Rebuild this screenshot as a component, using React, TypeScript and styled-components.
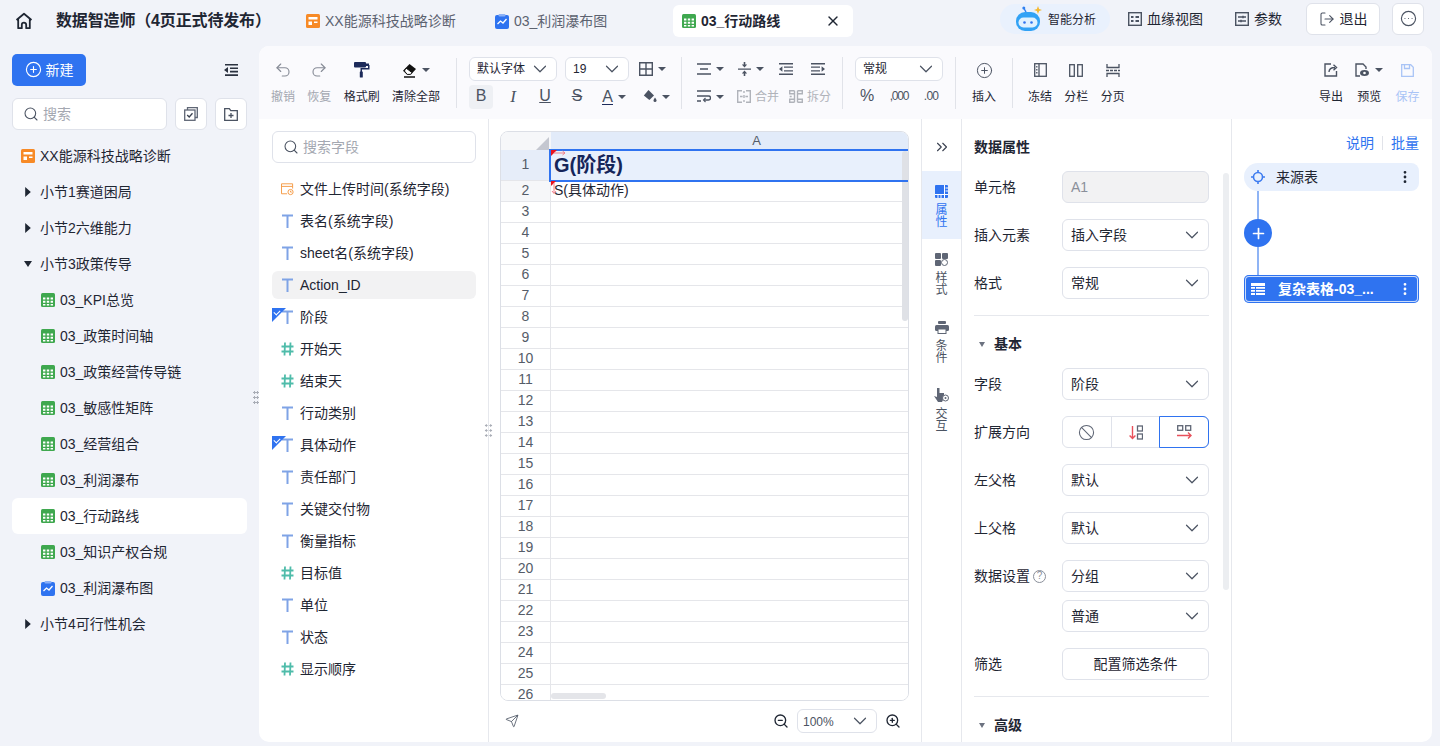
import React from "react";
import styled, { createGlobalStyle, css } from "styled-components";
import {
  Ban,
  ChevronDown,
  ChevronsRight,
  CircleEllipsis,
  CirclePlus,
  EllipsisVertical,
  LogOut,
  Plus,
  Redo2,
  Search,
  Send,
  Undo2,
  X,
  ZoomIn,
  ZoomOut,
} from "lucide-react";

const GlobalStyle = createGlobalStyle`
  html, body { margin: 0; height: 100%; overflow: hidden; }
  body {
    background: #f1f3f9;
    color: #1f2633;
    font-family: "Liberation Sans", "Noto Sans CJK SC", sans-serif;
    font-size: 14px;
    line-height: 1.4;
  }
  * { box-sizing: border-box; }
`;

/* text sits 1px under the middle of its row, icons stay centred */
const textDrop = css`
  padding-top: 2px;
  & > svg,
  & > span {
    margin-top: -2px;
  }
`;

/* ---------- small drawings ---------- */

const HomeIcon = () => (
  <svg width="18" height="18" viewBox="0 0 18 18" fill="none" stroke="#1f2633" strokeWidth="1.8">
    <path d="M1.5 8 9 1.8 16.5 8M3.2 7v9.2h3.6v-3.4a2.2 2.2 0 0 1 4.4 0v3.4h3.6V7" strokeLinejoin="round" />
  </svg>
);

const ReportIcon = () => (
  <svg width="14" height="14" viewBox="0 0 14 14">
    <rect width="14" height="14" rx="1.5" fill="#f78a27" />
    <path d="M2.5 3h9v2.5h-9zM2.5 7.500h3.500v3.500H2.500zM8 7.500h3.500V9H8z" fill="#fff" />
  </svg>
);

const SheetIcon = () => (
  <svg width="14" height="14" viewBox="0 0 14 14">
    <rect width="14" height="14" rx="1.5" fill="#3fa84f" />
    <path
      d="M2 4.500h2.400v2H2zM5.800 4.500h2.400v2H5.800zM9.600 4.500H12v2H9.600zM2 7.800h2.400v2H2zM5.800 7.800h2.400v2H5.800zM9.600 7.800H12v2H9.600zM2 11h2.400v1.500H2zM5.800 11h2.400v1.500H5.800zM9.600 11H12v1.500H9.600z"
      fill="#fff"
    />
  </svg>
);

const ChartIcon = () => (
  <svg width="14" height="15" viewBox="0 0 14 15">
    <rect y="1" width="14" height="14" rx="2" fill="#2f73f0" />
    <rect x="3.500" width="7" height="2.600" rx="1" fill="#8db2f7" />
    <path d="m2.500 10 3-3 2.500 2 3.500-4" fill="none" stroke="#fff" strokeWidth="1.300" />
  </svg>
);

const RobotIcon = () => (
  <svg width="28" height="26" viewBox="0 0 28 26">
    <path d="M11 6 9 2.500" stroke="#2f80f0" strokeWidth="1.500" />
    <circle cx="8.800" cy="2" r="1.500" fill="#2f80f0" />
    <path d="m23 0 1.100 2.900 2.900 1.100-2.900 1.100L23 8l-1.100-2.900L19 4l2.900-1.100z" fill="#f5b82e" />
    <rect x="1" y="6" width="24" height="19" rx="9" fill="#31a2f5" />
    <rect x="3.500" y="11.500" width="19" height="10" rx="5" fill="#dff1ff" />
    <circle cx="9.500" cy="16.500" r="1.300" fill="#2f73f0" />
    <circle cx="16.500" cy="16.500" r="1.300" fill="#2f73f0" />
  </svg>
);

const BloodIcon = () => (
  <svg width="14" height="14" viewBox="0 0 14 14" fill="none" stroke="#4b5362" strokeWidth="1.400">
    <rect x=".7" y=".7" width="12.600" height="12.600" />
    <path d="M3 5h2.500M3 9h2.500M7.500 5H11M7.500 9H11" strokeWidth="1.800" />
  </svg>
);

const ParamIcon = () => (
  <svg width="14" height="14" viewBox="0 0 14 14" fill="none" stroke="#4b5362" strokeWidth="1.400">
    <rect x=".7" y=".7" width="12.600" height="12.600" />
    <path d="M3 5h8M3 9h8" />
    <path d="M8 3.800v2.400M6 7.800v2.400" />
  </svg>
);

const CollapseIcon = () => (
  <svg width="14" height="12" viewBox="0 0 14 12" fill="#2b3240">
    <path d="M1 0h13v1.600H1zM6 3.400h8V5H6zM6 6.800h8v1.600H6zM1 10.200h13V12H1zM4 3v6L0 6z" />
  </svg>
);

const SelectAllIcon = () => (
  <svg width="14" height="14" viewBox="0 0 14 14" fill="none" stroke="#5f6675" strokeWidth="1.300">
    <path d="M3.500 3V.7h9.800v9.800H11" />
    <rect x=".7" y="3" width="10.300" height="10.300" />
    <path d="m3.200 8 2 2 3.300-3.800" stroke="#3a4150" />
  </svg>
);

const NewFolderIcon = () => (
  <svg width="14" height="13" viewBox="0 0 14 13" fill="none" stroke="#4b5362" strokeWidth="1.300">
    <path d="M.7 12.300V.7h4.600l1.500 2h6.500v9.600z" />
    <path d="M7 5v5M4.500 7.500h5" />
  </svg>
);

const RollerIcon = () => (
  <svg width="16" height="16" viewBox="0 0 16 16" fill="#1c2a5a">
    <rect x="0" y="0" width="12" height="5.500" rx="1" />
    <rect x="12" y="1.500" width="3" height="2.500" />
    <path d="M14 3h1.500v4.500H8V10H6.500V6H14z" />
    <rect x="5.800" y="9.500" width="3" height="6" rx=".6" />
  </svg>
);

const EraserIcon = () => (
  <svg width="15" height="15" viewBox="0 0 15 15">
    <path d="m7.500 1 6.500 5-5 5.400H5L1 7.800z" fill="#111" />
    <path d="m4 5 6 4.600L8.500 11.400H5.200L2.400 8z" fill="#fff" stroke="#111" />
    <path d="M2 14h11" stroke="#111" strokeWidth="1.400" />
  </svg>
);

const GridIcon = () => (
  <svg width="14" height="14" viewBox="0 0 14 14" fill="none" stroke="#4b5362" strokeWidth="1.400">
    <path d="M.7.7h12.600v12.600H.7zM7 .7v12.600M.7 7h12.600" />
  </svg>
);

const AlignIcon = () => (
  <svg width="14" height="12" viewBox="0 0 14 12" fill="none" stroke="#4b5362" strokeWidth="1.400">
    <path d="M0 1h14M3 6h8M0 11h14" />
  </svg>
);

const VAlignIcon = () => (
  <svg width="13" height="14" viewBox="0 0 13 14" fill="#4b5362">
    <path d="M0 6.400h13v1.300H0zM6.500 5.500 3.800 2.600h1.900V0h1.600v2.600h1.900zM6.500 8.500l2.700 2.900H7.300V14H5.700v-2.600H3.800z" />
  </svg>
);

const IndentIcon = ({ flip }: { flip?: boolean }) => (
  <svg width="14" height="12" viewBox="0 0 14 12" fill="#4b5362" style={flip ? { transform: "scaleX(-1)" } : undefined}>
    <path d="M0 0h14v1.400H0zM5 3.400h9v1.400H5zM5 7.200h9v1.400H5zM0 10.600h14V12H0zM3.400 3.200v5.600L0 6z" />
  </svg>
);

const WrapIcon = () => (
  <svg width="14" height="13" viewBox="0 0 14 13" fill="none" stroke="#4b5362" strokeWidth="1.400">
    <path d="M0 1h14M0 6h11.500a1.800 1.800 0 0 1 0 4H7M0 11h4" />
    <path d="m8.500 8-2 2 2 2" strokeWidth="1.100" />
  </svg>
);

const MergeIcon = () => (
  <svg width="14" height="13" viewBox="0 0 14 13" fill="none" stroke="#b0b3ba" strokeWidth="1.400">
    <path d="M5 .7H.7v11.600H5M9 .7h4.300v11.600H9M3 6.500h2.600M8.400 6.500H11M7 1v2M7 10v2M7 5v3" />
  </svg>
);

const SplitIcon = () => (
  <svg width="14" height="13" viewBox="0 0 14 13" fill="none" stroke="#b0b3ba" strokeWidth="1.400">
    <path d="M5.500.7H.7v3h4.800M5.500 9.300H.7v3h4.800M5.500.7v11.600M8.500.7h4.800v3H8.500M8.500 9.300h4.800v3H8.500M8.500.7v11.600M.7 6.500h2" />
  </svg>
);

const FillIcon = () => (
  <svg width="14" height="13" viewBox="0 0 14 13" fill="#4b5362">
    <path d="m5.500 0 5.500 5.500-4.600 4.600L.8 5.500z" />
    <path d="M12 7.500c1 1.500 1.500 2.300 1.500 3a1.500 1.500 0 0 1-3 0c0-.7.500-1.500 1.500-3z" />
  </svg>
);

const FreezeIcon = () => (
  <svg width="13" height="14" viewBox="0 0 13 14" fill="none" stroke="#4b5362" strokeWidth="1.300">
    <rect x=".7" y=".7" width="11.600" height="12.600" />
    <path d="M5 .7v12.600" />
    <path d="M2.800 3v8" strokeDasharray="1.500 1.500" />
  </svg>
);

const ColumnsIcon = () => (
  <svg width="14" height="13" viewBox="0 0 14 13" fill="none" stroke="#4b5362" strokeWidth="1.300">
    <rect x=".7" y=".7" width="4.600" height="11.600" />
    <rect x="8.700" y=".7" width="4.600" height="11.600" />
  </svg>
);

const PageBreakIcon = () => (
  <svg width="14" height="13" viewBox="0 0 14 13" fill="none" stroke="#4b5362" strokeWidth="1.300">
    <path d="M1 0v3.500h12V0M1 13V9.500h12V13" />
    <path d="M0 6.500h14" strokeDasharray="3 1" />
  </svg>
);

const ExportIcon = () => (
  <svg width="14" height="14" viewBox="0 0 14 14" fill="none" stroke="#4b5362" strokeWidth="1.400">
    <path d="M7 1H1v12h11.500V8" />
    <path d="M5 9c0-3 2-4.500 6-4.500M9.500 1.800l3 2.700-3 2.700" />
  </svg>
);

const PreviewIcon = () => (
  <svg width="15" height="14" viewBox="0 0 15 14" fill="none" stroke="#4b5362" strokeWidth="1.400">
    <path d="M5 13H1V1h7l3 3v2" />
    <ellipse cx="9.500" cy="10" rx="4.500" ry="3" fill="#4b5362" stroke="none" />
    <circle cx="9.500" cy="10" r="1.300" fill="#fff" stroke="none" />
  </svg>
);

const SaveIcon = () => (
  <svg width="13" height="13" viewBox="0 0 13 13" fill="none" stroke="#a9c4f6" strokeWidth="1.300">
    <path d="M.7.7h9l2.600 2.600v9H.7z" />
    <path d="M3.500.7v3.800h5V.7" />
  </svg>
);

const TypeIcon = () => (
  <svg width="13" height="14" viewBox="0 0 13 14" fill="none" stroke="#7fa3e6" strokeWidth="2">
    <path d="M1 1.500h11M6.500 1.500V14" />
  </svg>
);

const NumberIcon = () => (
  <svg width="13" height="14" viewBox="0 0 13 14" fill="none" stroke="#4fbcaa" strokeWidth="1.800">
    <path d="M4 .5 3.500 13.500M9.500.5 9 13.500M.5 4.500h12M.5 9.500h12" />
  </svg>
);

const DateIcon = () => (
  <svg width="15" height="14" viewBox="0 0 15 14" fill="none" stroke="#f59a45" strokeWidth="1.100">
    <path d="M7 12.500H.6V1h12.800v5.500M.6 4h12.800" />
    <circle cx="11" cy="10.500" r="3" />
    <path d="M11 9v1.600h1.400" />
  </svg>
);

const StyleIcon = () => (
  <svg width="13" height="13" viewBox="0 0 13 13">
    <rect width="6" height="6" rx="1" fill="#5f6675" />
    <rect x="7" width="6" height="6" rx="1" fill="#5f6675" />
    <rect y="7" width="6" height="6" rx="1" fill="#5f6675" />
    <circle cx="9.500" cy="9.500" r="3" fill="#fff" stroke="#5f6675" />
  </svg>
);

const PropertyIcon = () => (
  <svg width="13" height="13" viewBox="0 0 13 13">
    <rect width="13" height="13" rx="1" fill="#2f73f0" />
    <path d="M9.500 0v13M0 9.500h13" stroke="#fff" strokeWidth="1" />
    <path d="M10.500 3h3M10.500 6h3M3 10v3M6 10v3" stroke="#fff" />
  </svg>
);

const ConditionIcon = () => (
  <svg width="14" height="13" viewBox="0 0 14 13" fill="#5f6675">
    <rect x="3" width="8" height="3" rx="1" />
    <rect y="4" width="14" height="6" rx="1.500" />
    <rect x="3" y="8" width="8" height="4.500" fill="#fff" stroke="#5f6675" />
  </svg>
);

const InteractIcon = () => (
  <svg width="15" height="15" viewBox="0 0 15 15" fill="#5f6675">
    <path d="M3 0h2.500v5H10v5L8 14H4L0 8l3 1z" />
    <circle cx="11.500" cy="10" r="3" fill="#fff" stroke="#5f6675" />
    <circle cx="11.500" cy="10" r="1" />
  </svg>
);

const TargetIcon = () => (
  <svg width="14" height="14" viewBox="0 0 14 14" fill="none" stroke="#3e7cf0" strokeWidth="1.600">
    <circle cx="7" cy="7" r="4.500" />
    <path d="M7 0v3M7 11v3M0 7h3M11 7h3" />
  </svg>
);

const TableIcon = () => (
  <svg width="14" height="12" viewBox="0 0 14 12" fill="#fff">
    <path d="M0 0h14v3H0zM0 4h4v1.700H0zM5 4h9v1.700H5zM0 7h4v1.700H0zM5 7h9v1.700H5zM0 10h4v2H0zM5 10h9v2H5z" />
  </svg>
);

const DownExpandIcon = () => (
  <svg width="14" height="15" viewBox="0 0 14 15" fill="none">
    <path d="M3.500 1v12.500M.6 10.500l2.900 3 2.900-3" stroke="#e8505b" strokeWidth="1.400" />
    <rect x="8.500" y="1" width="5" height="5" stroke="#5f6675" strokeWidth="1.300" />
    <rect x="8.500" y="9" width="5" height="5" stroke="#5f6675" strokeWidth="1.300" />
  </svg>
);

const RightExpandIcon = () => (
  <svg width="15" height="14" viewBox="0 0 15 14" fill="none">
    <rect x=".7" y=".7" width="5" height="4.600" stroke="#5f6675" strokeWidth="1.300" />
    <rect x="8.700" y=".7" width="5" height="4.600" stroke="#5f6675" strokeWidth="1.300" />
    <path d="M0 10.500h14M11 7.500l3 3-3 3" stroke="#e8505b" strokeWidth="1.400" />
  </svg>
);

/* ---------- shell ---------- */

const Page = styled.div`
  width: 1440px;
  height: 746px;
  display: grid;
  grid-template-rows: 46px 696px;
  grid-template-columns: 259px 1173px;
`;

const TopBar = styled.header`
  grid-column: 1 / 3;
  width: 1440px;
  height: 46px;
  display: flex;
  align-items: flex-start;
`;

const HomeSlot = styled.div`
  width: 56px;
  height: 42px;
  padding-left: 15px;
  display: flex;
  align-items: center;
`;

const Title = styled.div`
  width: 250px;
  height: 42px;
  line-height: 42px;
  font-size: 16px;
  font-weight: 700;
  letter-spacing: -0.15px;
  color: #1f2633;
  white-space: nowrap;
`;

const Tab = styled.div<{ $active?: boolean; $w: number }>`
  width: ${(p) => p.$w}px;
  height: 32px;
  margin-top: 5px;
  padding-left: ${(p) => (p.$active ? 9 : 0)}px;
  display: flex;
  align-items: center;
  gap: 5px;
  border-radius: 6px;
  background: ${(p) => (p.$active ? "#fff" : "transparent")};
  color: ${(p) => (p.$active ? "#1f2633" : "#5c6270")};
  font-weight: ${(p) => (p.$active ? 700 : 400)};
  white-space: nowrap;
  ${textDrop}
`;

const TabClose = styled.span`
  margin-left: auto;
  margin-right: 12px;
  display: flex;
`;

const AiPill = styled.div`
  width: 110px;
  height: 30px;
  margin-top: 4px;
  margin-left: 147px;
  padding-left: 15px;
  display: flex;
  align-items: center;
  gap: 5px;
  border-radius: 15px;
  background: #e9f1fd;
  font-size: 12px;
  white-space: nowrap;
  ${textDrop}
`;

const TopLink = styled.div<{ $ml: number }>`
  height: 38px;
  margin-left: ${(p) => p.$ml}px;
  display: flex;
  align-items: center;
  gap: 5px;
  white-space: nowrap;
  ${textDrop}
`;

const TopButton = styled.button<{ $w: number; $ml: number }>`
  width: ${(p) => p.$w}px;
  height: 32px;
  margin-top: 3px;
  margin-left: ${(p) => p.$ml}px;
  display: flex;
  align-items: center;
  justify-content: center;
  gap: 5px;
  border: 1px solid #dfe2ea;
  border-radius: 6px;
  background: #fff;
  color: #1f2633;
  font: inherit;
  ${textDrop}
`;

/* ---------- sidebar ---------- */

const Sidebar = styled.aside`
  position: relative;
  padding: 8px 12px 0;
`;

const SideHead = styled.div`
  display: flex;
  align-items: center;
  justify-content: space-between;
  padding-right: 9px;
`;

const NewButton = styled.button`
  width: 74px;
  height: 32px;
  display: flex;
  align-items: center;
  justify-content: center;
  gap: 4px;
  border: 0;
  border-radius: 5px;
  background: #2f73f0;
  color: #fff;
  font: inherit;
  ${textDrop}
`;

const SideTools = styled.div`
  display: flex;
  gap: 8px;
  margin: 12px 0 8px;
`;

const SearchBox = styled.div<{ $w: number }>`
  width: ${(p) => p.$w}px;
  height: 32px;
  padding-left: 10px;
  display: flex;
  align-items: center;
  gap: 4px;
  border: 1px solid #dfe2ea;
  border-radius: 6px;
  background: #fff;
  color: #a4a8b1;
  flex-shrink: 0;
  ${textDrop}
`;

const SquareButton = styled.div`
  width: 32px;
  height: 32px;
  display: flex;
  align-items: center;
  justify-content: center;
  border: 1px solid #dfe2ea;
  border-radius: 6px;
  background: #fff;
`;

const TreeRow = styled.div<{ $level: number; $active?: boolean }>`
  height: 36px;
  padding-left: ${(p) => (p.$level === 2 ? 29 : p.$level === 1 ? 12 : 9)}px;
  display: flex;
  align-items: center;
  gap: ${(p) => (p.$level === 1 ? 8 : 5)}px;
  border-radius: 6px;
  background: ${(p) => (p.$active ? "#fff" : "transparent")};
  white-space: nowrap;
  ${textDrop}
`;

const TreeCaret = styled.span<{ $open?: boolean }>`
  width: 8px;
  height: 10px;
  display: inline-block;
  background: #1f2633;
  clip-path: ${(p) => (p.$open ? "polygon(0 20%, 100% 20%, 50% 80%)" : "polygon(15% 0, 85% 50%, 15% 100%)")};
`;

const DragDots = styled.span<{ $x: number; $y: number; $wide?: boolean }>`
  position: absolute;
  left: ${(p) => p.$x}px;
  top: ${(p) => p.$y}px;
  width: ${(p) => (p.$wide ? 9 : 6)}px;
  height: 14px;
  background-image: radial-gradient(circle, #a9adb6 1px, transparent 1.2px);
  background-size: ${(p) => (p.$wide ? "4.5px" : "3px")} 5px;
`;

/* ---------- main panel ---------- */

const Panel = styled.main`
  width: 1173px;
  height: 696px;
  border-radius: 10px;
  background: #fff;
  overflow: hidden;
  display: flex;
  flex-direction: column;
`;

const Toolbar = styled.div`
  height: 73px;
  display: flex;
  align-items: center;
  background: #fafafd;
  flex-shrink: 0;
`;

const Group = styled.div<{ $w: number; $pl: number; $noLine?: boolean }>`
  width: ${(p) => p.$w}px;
  height: 50px;
  padding-left: ${(p) => p.$pl}px;
  display: flex;
  gap: 12.3px;
  flex-shrink: 0;
  border-right: ${(p) => (p.$noLine ? "none" : "1px solid #e1e3e9")};
`;

const Stack = styled.div<{ $w: number; $pl: number }>`
  width: ${(p) => p.$w}px;
  height: 52px;
  padding-left: ${(p) => p.$pl}px;
  display: flex;
  flex-direction: column;
  gap: 4px;
  flex-shrink: 0;
  border-right: 1px solid #e1e3e9;
`;

const ToolRow = styled.div<{ $gap: number }>`
  height: 24px;
  display: flex;
  align-items: center;
  gap: ${(p) => p.$gap}px;
`;

const Tool = styled.div<{ $tone?: string }>`
  display: flex;
  flex-direction: column;
  align-items: center;
  font-size: 12px;
  line-height: 16px;
  color: ${(p) => p.$tone ?? "#1f2633"};
  white-space: nowrap;
`;

const ToolIcon = styled.div`
  height: 25px;
  margin-bottom: 6px;
  display: flex;
  align-items: center;
  justify-content: center;
  gap: 5px;
`;

const Caret = styled.span`
  width: 0;
  height: 0;
  border-left: 4px solid transparent;
  border-right: 4px solid transparent;
  border-top: 4.5px solid #4b5362;
`;

const Select = styled.div<{ $w: number; $h?: number; $small?: boolean; $pl?: number }>`
  width: ${(p) => p.$w}px;
  height: ${(p) => p.$h ?? 32}px;
  padding: 0 5px 0 ${(p) => p.$pl ?? (p.$small ? 7 : 8)}px;
  display: flex;
  align-items: center;
  justify-content: space-between;
  flex-shrink: 0;
  border: 1px solid #dfe2ea;
  border-radius: 6px;
  background: #fff;
  font-size: ${(p) => (p.$small ? 12 : 14)}px;
  white-space: nowrap;
  ${textDrop}
`;

const Chevron = styled(ChevronDown).attrs({ size: 22, strokeWidth: 1.3, color: "#4b5362" })`
  flex-shrink: 0;
`;

const Glyph = styled.span<{ $w?: number; $active?: boolean; $style?: string }>`
  width: ${(p) => p.$w ?? 24}px;
  height: 24px;
  display: flex;
  align-items: center;
  justify-content: center;
  gap: 5px;
  border-radius: 4px;
  background: ${(p) => (p.$active ? "#eef0f4" : "transparent")};
  color: #4b5362;
  font-size: 16px;
  ${(p) => p.$style ?? ""}
`;

const ColorA = styled.span`
  line-height: 15px;
  color: #4b5362;
  border-bottom: 1.5px solid #1c2a5a;
`;

const MutedAction = styled.span<{ $ml: number }>`
  margin-left: ${(p) => p.$ml}px;
  display: flex;
  align-items: center;
  gap: 4px;
  font-size: 12px;
  color: #b0b3ba;
  ${textDrop}
`;

const Workspace = styled.div`
  flex: 1;
  min-height: 0;
  display: flex;
`;

const FieldColumn = styled.section`
  position: relative;
  width: 230px;
  padding: 12px 12px 0 13px;
  border-right: 1px solid #e6e8ed;
  flex-shrink: 0;
`;

const FieldList = styled.div`
  margin-top: 12px;
`;

const FieldRow = styled.div<{ $hover?: boolean }>`
  position: relative;
  height: 28px;
  margin-bottom: 4px;
  padding-left: 9px;
  display: flex;
  align-items: center;
  gap: 6px;
  width: 204px;
  border-radius: 6px;
  background: ${(p) => (p.$hover ? "#f2f2f3" : "transparent")};
  white-space: nowrap;
  ${textDrop}
`;

const FieldIcon = styled.span`
  width: 13px;
  display: flex;
  justify-content: center;
  flex-shrink: 0;
`;

const UsedFlag = styled.span`
  position: absolute;
  left: 0;
  top: 7px;
  width: 14px;
  height: 14px;
  background: #2f73f0;
  clip-path: polygon(0 0, 100% 0, 0 100%);
  &::after {
    content: "";
    position: absolute;
    left: 2px;
    top: 2px;
    width: 5px;
    height: 3px;
    border-left: 1px solid #fff;
    border-bottom: 1px solid #fff;
    transform: rotate(-45deg);
  }
`;

const SheetColumn = styled.section`
  width: 433px;
  padding: 12px 12px 0 11px;
  border-right: 1px solid #e6e8ed;
  flex-shrink: 0;
`;

const Grid = styled.div`
  position: relative;
  height: 570px;
  border: 1px solid #dcdfe6;
  border-radius: 8px;
  overflow: hidden;
`;

const GridHead = styled.div`
  height: 18px;
  display: flex;
`;

const Corner = styled.div`
  width: 50px;
  background: #f6f7f9;
  position: relative;
  &::after {
    content: "";
    position: absolute;
    right: 2px;
    bottom: 0;
    width: 13px;
    height: 13px;
    background: #c4c7d0;
    clip-path: polygon(100% 0, 100% 100%, 0 100%);
  }
`;

/* the column runs on past the visible part of the sheet, so its letter sits right of the middle */
const ColHead = styled.div`
  flex: 1;
  padding-left: 54px;
  text-align: center;
  font-size: 13px;
  line-height: 18px;
  background: #e2ebf9;
  color: #555c68;
`;

const GridRow = styled.div<{ $h: number }>`
  height: ${(p) => p.$h}px;
  display: flex;
`;

const RowNum = styled.div<{ $tint?: string }>`
  width: 50px;
  display: flex;
  align-items: center;
  justify-content: center;
  background: ${(p) => p.$tint ?? "#fff"};
  border-right: 1px solid #e5e6ea;
  border-bottom: 1px solid #e5e6ea;
  color: #555c68;
  font-size: 14px;
`;

const Cell = styled.div<{ $selected?: boolean }>`
  flex: 1;
  padding-left: 3px;
  display: flex;
  align-items: center;
  background: ${(p) => (p.$selected ? "#e8f0fc" : "#fff")};
  border-bottom: 1px solid #e5e6ea;
  color: ${(p) => (p.$selected ? "#15255a" : "#1f2633")};
  font-size: ${(p) => (p.$selected ? 20 : 14)}px;
  font-weight: ${(p) => (p.$selected ? 700 : 400)};
  white-space: nowrap;
`;

/* selection frame lies over the cell and the scrollbar; its right side runs out of view */
const SelectionFrame = styled.div`
  position: absolute;
  z-index: 3;
  left: 48px;
  top: 17px;
  right: -3px;
  height: 33px;
  border: 2px solid #2f73f0;
  pointer-events: none;
`;

const CellMark = styled.svg<{ $top: number }>`
  position: absolute;
  z-index: 4;
  left: 50px;
  top: ${(p) => p.$top}px;
`;

const ScrollY = styled.div`
  position: absolute;
  z-index: 2;
  right: 0;
  top: 19px;
  width: 6px;
  height: 170px;
  border-radius: 3px;
  background: #dfe1e6;
`;

const ScrollX = styled.div`
  position: absolute;
  left: 50px;
  bottom: 1px;
  width: 55px;
  height: 6px;
  border-radius: 3px;
  background: #e4e5e9;
`;

const SheetFoot = styled.div`
  height: 40px;
  padding: 0 8px 0 5px;
  display: flex;
  align-items: center;
  color: #4b5362;
`;

const ZoomGroup = styled.div`
  margin-left: auto;
  display: flex;
  align-items: center;
  gap: 8px;
`;

const SideTabs = styled.nav`
  width: 40px;
  border-right: 1px solid #e6e8ed;
  flex-shrink: 0;
`;

const ExpandSlot = styled.div`
  height: 52px;
  padding-top: 4px;
  display: flex;
  align-items: center;
  justify-content: center;
  color: #3a4150;
`;

const SideTab = styled.div<{ $active?: boolean }>`
  height: 68px;
  padding-top: 14px;
  display: flex;
  flex-direction: column;
  align-items: center;
  background: ${(p) => (p.$active ? "#e8f0fd" : "transparent")};
  color: ${(p) => (p.$active ? "#2f73f0" : "#4b5362")};
  font-size: 12px;
`;

const SideTabIcon = styled.span`
  height: 13px;
  margin-bottom: 6px;
  display: flex;
  align-items: center;
`;

const SideTabText = styled.span`
  width: 12px;
  line-height: 12px;
`;

const Props = styled.section`
  position: relative;
  width: 270px;
  padding: 16px 0 0 12px;
  border-right: 1px solid #e6e8ed;
  flex-shrink: 0;
  overflow: hidden;
`;

const PropsTitle = styled.div`
  height: 24px;
  margin-bottom: 12px;
  line-height: 24px;
  font-weight: 700;
`;

const PropRow = styled.div<{ $mb?: number }>`
  height: 32px;
  margin-bottom: ${(p) => p.$mb ?? 16}px;
  display: flex;
  align-items: center;
`;

const PropLabel = styled.label`
  width: 88px;
  display: flex;
  align-items: center;
  gap: 3px;
  flex-shrink: 0;
  ${textDrop}
`;

const HelpMark = styled.span`
  width: 13px;
  height: 13px;
  display: inline-flex;
  align-items: center;
  justify-content: center;
  border: 1px solid #8a8f9a;
  border-radius: 50%;
  color: #8a8f9a;
  font-size: 10px;
  line-height: 1;
`;

const ReadOnly = styled.div`
  width: 147px;
  height: 32px;
  padding-left: 8px;
  line-height: 31px;
  border: 1px solid #dfe2ea;
  border-radius: 6px;
  background: #f2f2f3;
  color: #8a8f9a;
`;

const Divider = styled.hr`
  width: 235px;
  margin: 0 0 16px;
  border: 0;
  border-top: 1px solid #e6e8ed;
`;

const SectionHead = styled.div`
  height: 24px;
  margin-bottom: 12px;
  display: flex;
  align-items: center;
  gap: 9px;
  font-weight: 700;
  ${textDrop}
`;

const SectionCaret = styled.span`
  margin-left: 5px;
  width: 0;
  height: 0;
  border-left: 3.5px solid transparent;
  border-right: 3.5px solid transparent;
  border-top: 5px solid #6c7280;
`;

const Segments = styled.div`
  width: 147px;
  height: 32px;
  display: flex;
  border: 1px solid #dfe2ea;
  border-radius: 6px;
`;

const Segment = styled.div<{ $on?: boolean }>`
  flex: 1;
  display: flex;
  align-items: center;
  justify-content: center;
  margin: -1px 0;
  border-left: 1px solid #dfe2ea;
  &:first-child { border-left: 0; margin-left: 0; }
  ${(p) =>
    p.$on
      ? "margin: -1px -1px -1px 0; border: 1px solid #2f73f0; border-radius: 0 6px 6px 0;"
      : ""}
`;

const WideButton = styled.div`
  width: 147px;
  height: 32px;
  line-height: 30px;
  text-align: center;
  border: 1px solid #dfe2ea;
  border-radius: 6px;
`;

const PropsScroll = styled.div`
  position: absolute;
  right: 2px;
  top: 54px;
  width: 6px;
  height: 417px;
  border-radius: 3px;
  background: #eceef1;
`;

const Flow = styled.section`
  flex: 1;
  padding: 14px 13px 0 12px;
  display: flex;
  flex-direction: column;
  align-items: flex-start;
`;

const FlowLinks = styled.div`
  width: 100%;
  height: 20px;
  display: flex;
  justify-content: flex-end;
  align-items: center;
  gap: 8px;
  color: #2f73f0;
  ${textDrop}
`;

const LinkSep = styled.span`
  width: 1px;
  height: 14px;
  background: #e1e3e9;
`;

const SourceNode = styled.div`
  width: 175px;
  height: 28px;
  margin-top: 10px;
  padding: 0 6px 0 7px;
  display: flex;
  align-items: center;
  gap: 11px;
  border-radius: 14px 8px 8px 14px;
  background: #e8f0fd;
  ${textDrop}
`;

const Connector = styled.div`
  width: 2px;
  height: 28px;
  margin-left: 13px;
  background: #8fb4f5;
`;

const AddCircle = styled.div`
  width: 28px;
  height: 28px;
  display: flex;
  align-items: center;
  justify-content: center;
  border-radius: 50%;
  background: #2f73f0;
  color: #fff;
`;

const TableNode = styled.div`
  width: 175px;
  height: 28px;
  padding: 0 6px 0 7px;
  display: flex;
  align-items: center;
  gap: 13px;
  border-radius: 5px;
  background: #2f73f0;
  box-shadow: inset 0 0 0 1px #2f73f0, inset 0 0 0 2px rgba(255, 255, 255, 0.75);
  color: #fff;
  font-weight: 700;
  white-space: nowrap;
  ${textDrop}
`;

const NodeMenu = styled.span`
  margin-left: auto;
  display: flex;
`;

/* ---------- data ---------- */

const tree = [
  { label: "XX能源科技战略诊断", level: 0, icon: <ReportIcon /> },
  { label: "小节1赛道困局", level: 1 },
  { label: "小节2六维能力", level: 1 },
  { label: "小节3政策传导", level: 1, open: true },
  { label: "03_KPI总览", level: 2, icon: <SheetIcon /> },
  { label: "03_政策时间轴", level: 2, icon: <SheetIcon /> },
  { label: "03_政策经营传导链", level: 2, icon: <SheetIcon /> },
  { label: "03_敏感性矩阵", level: 2, icon: <SheetIcon /> },
  { label: "03_经营组合", level: 2, icon: <SheetIcon /> },
  { label: "03_利润瀑布", level: 2, icon: <SheetIcon /> },
  { label: "03_行动路线", level: 2, icon: <SheetIcon />, active: true },
  { label: "03_知识产权合规", level: 2, icon: <SheetIcon /> },
  { label: "03_利润瀑布图", level: 2, icon: <ChartIcon /> },
  { label: "小节4可行性机会", level: 1 },
];

const fields = [
  { label: "文件上传时间(系统字段)", kind: "date" },
  { label: "表名(系统字段)", kind: "text" },
  { label: "sheet名(系统字段)", kind: "text" },
  { label: "Action_ID", kind: "text", hover: true },
  { label: "阶段", kind: "text", used: true },
  { label: "开始天", kind: "num" },
  { label: "结束天", kind: "num" },
  { label: "行动类别", kind: "text" },
  { label: "具体动作", kind: "text", used: true },
  { label: "责任部门", kind: "text" },
  { label: "关键交付物", kind: "text" },
  { label: "衡量指标", kind: "text" },
  { label: "目标值", kind: "num" },
  { label: "单位", kind: "text" },
  { label: "状态", kind: "text" },
  { label: "显示顺序", kind: "num" },
];

const rowNumbers = Array.from({ length: 26 }, (_, i) => i + 1);

const sideTabs = [
  { text: "属性", icon: <PropertyIcon />, active: true },
  { text: "样式", icon: <StyleIcon /> },
  { text: "条件", icon: <ConditionIcon /> },
  { text: "交互", icon: <InteractIcon /> },
];

const fieldIcon = (kind: string) => {
  if (kind === "date") return <DateIcon />;
  if (kind === "num") return <NumberIcon />;
  return <TypeIcon />;
};

const rowTint = (n: number) => (n === 1 ? "#e6edf9" : n === 2 ? "#f6f7f9" : undefined);

export default function App() {
  return (
    <>
      <GlobalStyle />
      <Page>
        <TopBar>
          <HomeSlot>
            <HomeIcon />
          </HomeSlot>
          <Title>数据智造师（4页正式待发布）</Title>
          <Tab $w={189}>
            <ReportIcon />
            XX能源科技战略诊断
          </Tab>
          <Tab $w={178}>
            <ChartIcon />
            03_利润瀑布图
          </Tab>
          <Tab $w={180} $active>
            <SheetIcon />
            03_行动路线
            <TabClose>
              <X size={16} strokeWidth={2} color="#1f2633" />
            </TabClose>
          </Tab>
          <AiPill>
            <RobotIcon />
            智能分析
          </AiPill>
          <TopLink $ml={18}>
            <BloodIcon />
            血缘视图
          </TopLink>
          <TopLink $ml={32}>
            <ParamIcon />
            参数
          </TopLink>
          <TopButton $w={74} $ml={24}>
            <LogOut size={16} strokeWidth={1.6} color="#4b5362" />
            退出
          </TopButton>
          <TopButton $w={32} $ml={12}>
            <CircleEllipsis size={17} strokeWidth={1.6} color="#4b5362" />
          </TopButton>
        </TopBar>

        <Sidebar>
          <SideHead>
            <NewButton>
              <CirclePlus size={17} strokeWidth={1.6} />
              新建
            </NewButton>
            <CollapseIcon />
          </SideHead>
          <SideTools>
            <SearchBox $w={155}>
              <Search size={16} strokeWidth={1.6} color="#4b5362" />
              搜索
            </SearchBox>
            <SquareButton>
              <SelectAllIcon />
            </SquareButton>
            <SquareButton>
              <NewFolderIcon />
            </SquareButton>
          </SideTools>
          {tree.map((item) => (
            <TreeRow key={item.label} $level={item.level} $active={item.active}>
              {item.level === 1 && <TreeCaret $open={item.open} />}
              {item.icon}
              {item.label}
            </TreeRow>
          ))}
          <DragDots $x={253} $y={344} />
        </Sidebar>

        <Panel>
          <Toolbar>
            <Group $w={198} $pl={12}>
              <Tool $tone="#a3a7b0">
                <ToolIcon>
                  <Undo2 size={18} strokeWidth={1.5} color="#868b96" />
                </ToolIcon>
                撤销
              </Tool>
              <Tool $tone="#a3a7b0">
                <ToolIcon>
                  <Redo2 size={18} strokeWidth={1.5} color="#868b96" />
                </ToolIcon>
                恢复
              </Tool>
              <Tool>
                <ToolIcon>
                  <RollerIcon />
                </ToolIcon>
                格式刷
              </Tool>
              <Tool>
                <ToolIcon>
                  <EraserIcon />
                  <Caret />
                </ToolIcon>
                清除全部
              </Tool>
            </Group>
            <Stack $w={225} $pl={12}>
              <ToolRow $gap={8}>
                <Select $w={88} $h={24} $small>
                  默认字体
                  <Chevron />
                </Select>
                <Select $w={64} $h={24} $small>
                  19
                  <Chevron />
                </Select>
                <Glyph $w={30}>
                  <GridIcon />
                  <Caret />
                </Glyph>
              </ToolRow>
              <ToolRow $gap={8}>
                <Glyph $active>B</Glyph>
                <Glyph $style="font-style: italic; font-family: 'Liberation Serif', serif; font-size: 17px;">I</Glyph>
                <Glyph $style="text-decoration: underline;">U</Glyph>
                <Glyph $style="text-decoration: line-through;">S</Glyph>
                <Glyph $w={34}>
                  <ColorA>A</ColorA>
                  <Caret />
                </Glyph>
                <Glyph $w={34}>
                  <FillIcon />
                  <Caret />
                </Glyph>
              </ToolRow>
            </Stack>
            <Stack $w={161} $pl={14}>
              <ToolRow $gap={13}>
                <Glyph $w={28}>
                  <AlignIcon />
                  <Caret />
                </Glyph>
                <Glyph $w={27}>
                  <VAlignIcon />
                  <Caret />
                </Glyph>
                <Glyph $w={14} style={{ marginLeft: 2 }}>
                  <IndentIcon />
                </Glyph>
                <Glyph $w={14} style={{ marginLeft: 5 }}>
                  <IndentIcon flip />
                </Glyph>
              </ToolRow>
              <ToolRow $gap={0}>
                <Glyph $w={28}>
                  <WrapIcon />
                  <Caret />
                </Glyph>
                <MutedAction $ml={13}>
                  <MergeIcon />
                  合并
                </MutedAction>
                <MutedAction $ml={10}>
                  <SplitIcon />
                  拆分
                </MutedAction>
              </ToolRow>
            </Stack>
            <Stack $w={113} $pl={12}>
              <ToolRow $gap={0}>
                <Select $w={88} $h={24} $small>
                  常规
                  <Chevron />
                </Select>
              </ToolRow>
              <ToolRow $gap={8}>
                <Glyph $style="font-size: 16px;">%</Glyph>
                <Glyph $style="font-size: 12px; letter-spacing: -1.2px;">,000</Glyph>
                <Glyph $style="font-size: 12px; letter-spacing: -0.8px;">.00</Glyph>
              </ToolRow>
            </Stack>
            <Group $w={57} $pl={16}>
              <Tool>
                <ToolIcon>
                  <CirclePlus size={17} strokeWidth={1.4} color="#4b5362" />
                </ToolIcon>
                插入
              </Tool>
            </Group>
            <Group $w={298} $pl={15} $noLine>
              <Tool>
                <ToolIcon>
                  <FreezeIcon />
                </ToolIcon>
                冻结
              </Tool>
              <Tool>
                <ToolIcon>
                  <ColumnsIcon />
                </ToolIcon>
                分栏
              </Tool>
              <Tool>
                <ToolIcon>
                  <PageBreakIcon />
                </ToolIcon>
                分页
              </Tool>
            </Group>
            <Group $w={116} $pl={8} $noLine>
              <Tool>
                <ToolIcon>
                  <ExportIcon />
                </ToolIcon>
                导出
              </Tool>
              <Tool>
                <ToolIcon>
                  <PreviewIcon />
                  <Caret />
                </ToolIcon>
                预览
              </Tool>
              <Tool $tone="#a9c4f6">
                <ToolIcon>
                  <SaveIcon />
                </ToolIcon>
                保存
              </Tool>
            </Group>
          </Toolbar>

          <Workspace>
            <FieldColumn>
              <SearchBox $w={204}>
                <Search size={16} strokeWidth={1.6} color="#4b5362" />
                搜索字段
              </SearchBox>
              <FieldList>
                {fields.map((f) => (
                  <FieldRow key={f.label} $hover={f.hover}>
                    {f.used && <UsedFlag />}
                    <FieldIcon>{fieldIcon(f.kind)}</FieldIcon>
                    {f.label}
                  </FieldRow>
                ))}
              </FieldList>
              <DragDots $x={225} $y={304} $wide />
            </FieldColumn>

            <SheetColumn>
              <Grid>
                <GridHead>
                  <Corner />
                  <ColHead>A</ColHead>
                </GridHead>
                {rowNumbers.map((n) => (
                  <GridRow key={n} $h={n === 1 ? 31 : 21}>
                    <RowNum $tint={rowTint(n)}>{n}</RowNum>
                    <Cell $selected={n === 1}>
                      {n === 1 ? "G(阶段)" : n === 2 ? "S(具体动作)" : ""}
                    </Cell>
                  </GridRow>
                ))}
                <ScrollY />
                <SelectionFrame />
                <CellMark $top={18} width="16" height="10" viewBox="0 0 16 10">
                  <path d="M0 0h6L0 6z" fill="#e8121e" />
                  <path d="M3 3h11M11.500 1l2.500 2-2.500 2" fill="none" stroke="#f0808a" />
                </CellMark>
                <CellMark $top={49} width="6" height="14" viewBox="0 0 6 14">
                  <path d="M0 0h5L0 5z" fill="#e8121e" />
                  <path d="M3 2v10M1 10l2 2.500L5 10" fill="none" stroke="#f0808a" />
                </CellMark>
                <ScrollX />
              </Grid>
              <SheetFoot>
                <Send size={14} strokeWidth={1.4} color="#4b5362" />
                <ZoomGroup>
                  <ZoomOut size={16} strokeWidth={2} color="#1f2633" />
                  <Select $w={80} $h={24} $small $pl={5}>
                    100%
                    <Chevron />
                  </Select>
                  <ZoomIn size={16} strokeWidth={2} color="#1f2633" />
                </ZoomGroup>
              </SheetFoot>
            </SheetColumn>

            <SideTabs>
              <ExpandSlot>
                <ChevronsRight size={18} strokeWidth={1.5} />
              </ExpandSlot>
              {sideTabs.map((t) => (
                <SideTab key={t.text} $active={t.active}>
                  <SideTabIcon>{t.icon}</SideTabIcon>
                  <SideTabText>{t.text}</SideTabText>
                </SideTab>
              ))}
            </SideTabs>

            <Props>
              <PropsTitle>数据属性</PropsTitle>
              <PropRow>
                <PropLabel>单元格</PropLabel>
                <ReadOnly>A1</ReadOnly>
              </PropRow>
              <PropRow>
                <PropLabel>插入元素</PropLabel>
                <Select $w={147}>
                  插入字段
                  <Chevron />
                </Select>
              </PropRow>
              <PropRow>
                <PropLabel>格式</PropLabel>
                <Select $w={147}>
                  常规
                  <Chevron />
                </Select>
              </PropRow>
              <Divider />
              <SectionHead>
                <SectionCaret />
                基本
              </SectionHead>
              <PropRow>
                <PropLabel>字段</PropLabel>
                <Select $w={147}>
                  阶段
                  <Chevron />
                </Select>
              </PropRow>
              <PropRow>
                <PropLabel>扩展方向</PropLabel>
                <Segments>
                  <Segment>
                    <Ban size={17} strokeWidth={1.5} color="#5f6675" />
                  </Segment>
                  <Segment>
                    <DownExpandIcon />
                  </Segment>
                  <Segment $on>
                    <RightExpandIcon />
                  </Segment>
                </Segments>
              </PropRow>
              <PropRow>
                <PropLabel>左父格</PropLabel>
                <Select $w={147}>
                  默认
                  <Chevron />
                </Select>
              </PropRow>
              <PropRow>
                <PropLabel>上父格</PropLabel>
                <Select $w={147}>
                  默认
                  <Chevron />
                </Select>
              </PropRow>
              <PropRow $mb={8}>
                <PropLabel>
                  数据设置
                  <HelpMark>?</HelpMark>
                </PropLabel>
                <Select $w={147}>
                  分组
                  <Chevron />
                </Select>
              </PropRow>
              <PropRow>
                <PropLabel />
                <Select $w={147}>
                  普通
                  <Chevron />
                </Select>
              </PropRow>
              <PropRow>
                <PropLabel>筛选</PropLabel>
                <WideButton>配置筛选条件</WideButton>
              </PropRow>
              <Divider />
              <SectionHead>
                <SectionCaret />
                高级
              </SectionHead>
              <PropsScroll />
            </Props>

            <Flow>
              <FlowLinks>
                说明
                <LinkSep />
                批量
              </FlowLinks>
              <SourceNode>
                <TargetIcon />
                来源表
                <NodeMenu>
                  <EllipsisVertical size={16} strokeWidth={2.2} color="#1f2633" />
                </NodeMenu>
              </SourceNode>
              <Connector />
              <AddCircle>
                <Plus size={17} strokeWidth={2.4} />
              </AddCircle>
              <Connector />
              <TableNode>
                <TableIcon />
                复杂表格-03_...
                <NodeMenu>
                  <EllipsisVertical size={16} strokeWidth={2.2} color="#fff" />
                </NodeMenu>
              </TableNode>
            </Flow>
          </Workspace>
        </Panel>
      </Page>
    </>
  );
}
